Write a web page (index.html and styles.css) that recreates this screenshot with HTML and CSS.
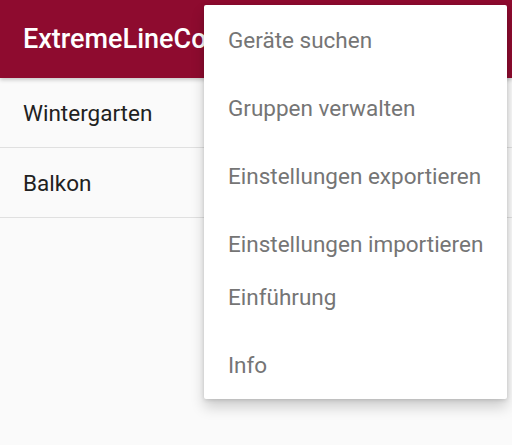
FILE: index.html
```html
<!DOCTYPE html>
<html lang="de">
<head>
    <meta charset="UTF-8">
    <meta name="viewport" content="width=device-width, initial-scale=1.0">
    <title>ExtremeLineControl</title>
    <link rel="stylesheet" href="styles.css">
</head>
<body>
    <div class="app">
        <header class="toolbar">
            <h1>ExtremeLineControl</h1>
        </header>

        <ul class="device-list">
            <li>Wintergarten</li>
            <li>Balkon</li>
        </ul>

        <div class="menu">
            <div class="menu-item">Geräte suchen</div>
            <div class="menu-item">Gruppen verwalten</div>
            <div class="menu-item">Einstellungen exportieren</div>
            <div class="menu-item">Einstellungen importieren</div>
            <div class="menu-item short">Einführung</div>
            <div class="menu-item">Info</div>
        </div>
    </div>
</body>
</html>
```

FILE: styles.css
```css
body {
    margin: 0;
    padding: 0;
    font-family: Roboto, "Noto Sans", sans-serif;
    background-color: #fafafa;
}
.app {
    position: relative;
    width: 512px;
    height: 445px;
    overflow: hidden;
}
.toolbar {
    height: 78px;
    background-color: #8e0b2f;
    display: flex;
    align-items: center;
    padding-left: 23px;
    box-shadow: 0 2px 4px rgba(0, 0, 0, 0.2);
    position: relative;
    z-index: 1;
}
.toolbar h1 {
    margin: 0;
    font-size: 27px;
    font-weight: 500;
    color: #ffffff;
    white-space: nowrap;
}
.device-list {
    list-style: none;
    margin: 0;
    padding: 0;
}
.device-list li {
    height: 69px;
    display: flex;
    align-items: center;
    padding-left: 23px;
    font-size: 22.5px;
    color: #212121;
    border-bottom: 1px solid #e0e0e0;
}
.menu {
    position: absolute;
    top: 5px;
    left: 204px;
    width: 303px;
    padding-top: 1px;
    background-color: #ffffff;
    border-radius: 2px;
    box-shadow: 0 8px 14px rgba(0, 0, 0, 0.18), 0 1px 4px rgba(0, 0, 0, 0.15);
    z-index: 2;
}
.menu-item {
    height: 68px;
    display: flex;
    align-items: center;
    padding-left: 24px;
    font-size: 22.5px;
    color: #757575;
    white-space: nowrap;
}
.menu-item.short {
    height: 38px;
    padding-bottom: 15px;
}
```
